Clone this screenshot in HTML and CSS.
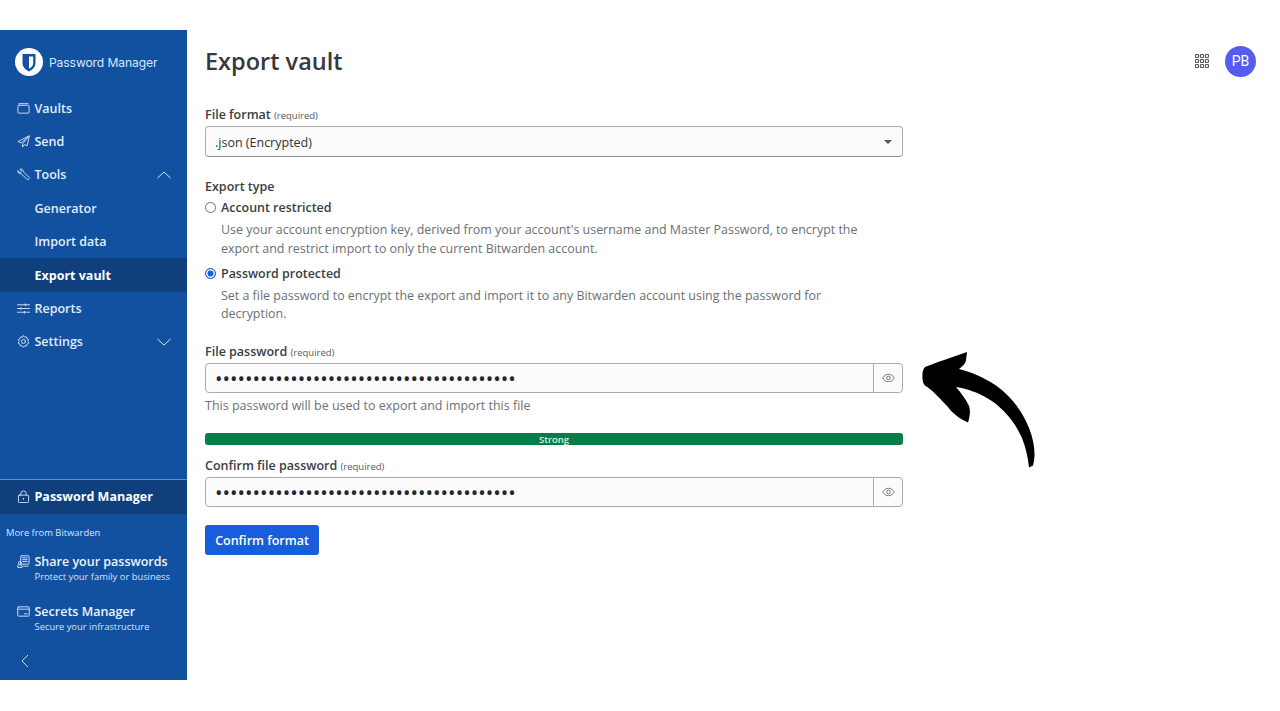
FILE: index.html
```html
<!DOCTYPE html>
<html lang="en">
<head>
<meta charset="utf-8">
<title>Export vault</title>
<link rel="stylesheet" href="styles.css">
</head>
<body>
<div class="frame">
  <aside class="sidebar">
    <div class="brand">
      <span class="brand-badge">
        <svg viewBox="0 0 28 28" width="28" height="28"><circle cx="14" cy="14" r="14" fill="#fff"/><path d="M7.500 6h13v9c0 4.200-3.200 6.800-6.500 8.500C10.700 21.800 7.500 19.200 7.500 15z" fill="#12519f"/><path d="M14 8.500h4.200V15c0 2.800-2 4.600-4.200 5.800z" fill="#fff"/></svg>
      </span>
      <span class="brand-name">Password Manager</span>
    </div>
    <nav class="nav">
      <a class="nav-row"><svg class="ico" viewBox="0 0 14 14"><rect x="1" y="3.500" width="12" height="8.500" rx="1"/><path d="M2 1.800h10"/></svg><span>Vaults</span></a>
      <a class="nav-row"><svg class="ico" viewBox="0 0 14 14"><path d="M13 1 1 7l3.500 1.500L13 1 6 9.500 6 13l2-2.700 2.500 1.200z"/></svg><span>Send</span></a>
      <a class="nav-row"><svg class="ico" viewBox="0 0 14 14"><path d="M1 3.200 3.200 5.200 5 3.400 3.100 1.200C5 .4 7 1.800 6.800 4L12.800 10c.7.700.6 1.500 0 2.100s-1.400.7-2.100 0L4.600 6.200C2.500 6.600.5 5.200 1 3.200z"/></svg><span>Tools</span><svg class="chev" viewBox="0 0 14 8"><path d="M.5 7 7 1l6.500 6"/></svg></a>
      <a class="nav-row sub"><span>Generator</span></a>
      <a class="nav-row sub"><span>Import data</span></a>
      <a class="nav-row sub active"><span>Export vault</span></a>
      <a class="nav-row"><svg class="ico" viewBox="0 0 14 14"><path d="M.5 3h13M.5 7h13M.5 11h13M9 2v2M4 6v2M8 10v2"/></svg><span>Reports</span></a>
      <a class="nav-row"><svg class="ico" viewBox="0 0 14 14"><path d="M7 .8 8.300 2.300l2-.2.500 2 1.800 1-.8 1.900.8 1.900-1.800 1-.5 2-2-.2L7 13.200l-1.300-1.500-2 .2-.5-2-1.800-1 .8-1.900-.8-1.900 1.800-1 .5-2 2 .2z"/><circle cx="7" cy="7" r="2.200"/></svg><span>Settings</span><svg class="chev" viewBox="0 0 14 8"><path d="M.5 1 7 7l6.500-6"/></svg></a>
    </nav>
    <div class="side-foot">
      <a class="product-row"><svg class="ico" viewBox="0 0 14 14"><rect x="1.500" y="5.500" width="11" height="8" rx="1"/><path d="M4 5.500V4a3 3 0 0 1 6 0v1.500M7 9v1"/></svg><span>Password Manager</span></a>
      <p class="more">More from Bitwarden</p>
      <a class="promo"><svg class="ico" viewBox="0 0 14 14"><rect x="4" y=".8" width="9" height="9" rx=".8"/><path d="M6 3h5M6 5h5M6 7h5"/><circle cx="3" cy="8.500" r="1.500"/><path d="M.8 13v-1.200c0-.8.600-1.300 1.300-1.300h2c.8 0 1.300.5 1.300 1.300V13zM7 12h5"/></svg><span class="promo-text"><b>Share your passwords</b><small>Protect your family or business</small></span></a>
      <a class="promo"><svg class="ico" viewBox="0 0 14 14"><rect x=".8" y="2" width="12.400" height="10" rx="1"/><path d="M.8 4.500h12.400M8 9.500h3"/></svg><span class="promo-text"><b>Secrets Manager</b><small>Secure your infrastructure</small></span></a>
      <div class="collapse"><svg viewBox="0 0 8 14" width="8" height="14"><path d="M7 1 1 7l6 6"/></svg></div>
    </div>
  </aside>
  <main class="main">
    <header class="top">
      <h1>Export vault</h1>
      <div class="top-tools">
        <svg class="apps" viewBox="0 0 14 14" width="14" height="14"><g><rect x=".5" y=".5" width="3" height="3" rx=".8"/><rect x="5.500" y=".5" width="3" height="3" rx=".8"/><rect x="10.500" y=".5" width="3" height="3" rx=".8"/><rect x=".5" y="5.500" width="3" height="3" rx=".8"/><rect x="5.500" y="5.500" width="3" height="3" rx=".8"/><rect x="10.500" y="5.500" width="3" height="3" rx=".8"/><rect x=".5" y="10.500" width="3" height="3" rx=".8"/><rect x="5.500" y="10.500" width="3" height="3" rx=".8"/><rect x="10.500" y="10.500" width="3" height="3" rx=".8"/></g></svg>
        <span class="avatar">PB</span>
      </div>
    </header>
    <form class="form">
      <div class="field-label">File format <small>(required)</small></div>
      <div class="select"><span>.json (Encrypted)</span><i class="caret"></i></div>

      <div class="type-label">Export type</div>
      <div class="radio-row"><span class="radio"></span>Account restricted</div>
      <p class="hint">Use your account encryption key, derived from your account's username and Master Password, to encrypt the export and restrict import to only the current Bitwarden account.</p>
      <div class="radio-row second"><span class="radio on"></span>Password protected</div>
      <p class="hint hint-tight">Set a file password to encrypt the export and import it to any Bitwarden account using the password for decryption.</p>

      <div class="field-label pw-label">File password <small>(required)</small></div>
      <div class="pw-group">
        <div class="pw-value">••••••••••••••••••••••••••••••••••••••••</div>
        <div class="pw-eye"><svg class="eye" viewBox="0 0 14 10" width="13" height="10"><path d="M.7 5C2.300 2.300 4.500 1 7 1s4.700 1.300 6.300 4C11.700 7.700 9.500 9 7 9S2.300 7.700.7 5z"/><circle cx="7" cy="5" r="2"/></svg></div>
      </div>
      <p class="helper">This password will be used to export and import this file</p>
      <div class="meter">Strong</div>
      <div class="field-label confirm-label">Confirm file password <small>(required)</small></div>
      <div class="pw-group">
        <div class="pw-value">••••••••••••••••••••••••••••••••••••••••</div>
        <div class="pw-eye"><svg class="eye" viewBox="0 0 14 10" width="13" height="10"><path d="M.7 5C2.300 2.300 4.500 1 7 1s4.700 1.300 6.300 4C11.700 7.700 9.500 9 7 9S2.300 7.700.7 5z"/><circle cx="7" cy="5" r="2"/></svg></div>
      </div>
      <button class="btn" type="button">Confirm format</button>
    </form>
    <svg class="arrow" viewBox="0 0 120 120" width="120" height="120"><path d="M1.500 22C1 28 2 33 5.500 34.500C14 40.500 19 47 27 55C31 61 39 67 47 70.500C49 65 49.500 58 48 54C45 47 39 40 35 35C47 37 58 41 66 46C80 54 93 68 101 86C105 96 107 106 108 115.500L112 113.500C115 103 113.500 90 108 76C100 56 88 43 75 33.500C64 26 50 20 38 17C42 14 45 11 45 8L46 0C31 5 14 11 4 15C2.500 17 1.500 19 1.500 22z" fill="#000"/></svg>
  </main>
</div>
</body>
</html>
```
FILE: styles.css
```css
* { box-sizing: border-box; }
html, body { margin: 0; padding: 0; background: #fff; }
body { font-family: "Open Sans", "Liberation Sans", sans-serif; color: #2f3338; overflow: hidden; height: 711px; }
.frame { display: flex; height: 650px; margin-top: 30px; background: #fff; }

.sidebar { width: 187px; flex: none; background: #12519f; color: #eaf1fb; display: flex; flex-direction: column; }
.brand { display: flex; align-items: center; gap: 6px; height: 62px; margin-top: 1px; padding-left: 15px; }
.brand-badge { display: flex; width: 28px; height: 28px; }
.brand-name { font-family: "Inter", "Open Sans", sans-serif; font-size: 12.100px; color: #dbe7f8; letter-spacing: -0.1px; }
.nav { display: flex; flex-direction: column; margin-top: -1.500px; }
.nav-row { display: flex; align-items: center; height: 33.4px; padding-left: 17px; font-size: 12.500px; font-weight: 600; color: #e3edfb; }
.nav-row .ico { margin-right: 4.500px; }
.nav-row.sub { padding-left: 34.500px; }
.nav-row.active { background: #0f3f7c; color: #fff; font-weight: 700; }
.ico { width: 13px; height: 13px; flex: none; fill: none; stroke: #d5e3f7; stroke-width: 1; stroke-linejoin: round; stroke-linecap: round; }
.chev { width: 14px; height: 8px; margin-left: auto; margin-right: 16px; fill: none; stroke: #d5e3f7; stroke-width: 1; }

.side-foot { margin-top: auto; display: flex; flex-direction: column; }
.product-row { display: flex; align-items: center; gap: 4.500px; height: 35px; padding-left: 17px; background: #0f3f7c; border-top: 1px solid #5d8fcf; color: #fff; font-size: 12.500px; font-weight: 700; }
.more { margin: 11.500px 0 0 6px; font-size: 9.400px; line-height: 15px; color: #dbe7f8; }
.promo { display: flex; align-items: flex-start; gap: 4.500px; height: 50px; padding: 12.500px 0 0 17px; }
.promo .ico { margin-top: 2px; }
.promo-text { display: flex; flex-direction: column; }
.promo-text b { font-size: 12.500px; font-weight: 600; line-height: 17px; color: #edf3fc; }
.promo-text small { font-size: 9.400px; line-height: 13px; color: #d5e3f7; }
.collapse { height: 40px; padding: 11px 0 0 21px; }
.collapse svg { fill: none; stroke: #c6d9f3; stroke-width: 1; }

.main { position: relative; flex: 1; padding: 0 24px 0 18px; }
.top { display: flex; align-items: center; justify-content: space-between; height: 62px; }
.top h1 { margin: 0; font-size: 23.500px; font-weight: 600; line-height: 32px; color: #36393d; }
.top-tools { display: flex; align-items: center; gap: 16px; }
.apps { fill: none; stroke: #55585c; stroke-width: 1.200; }
.avatar { display: flex; align-items: center; justify-content: center; width: 31px; height: 31px; border-radius: 50%; background: #575cf0; color: #fff; font-family: "Roboto", sans-serif; font-size: 14px; }

.form { width: 698px; margin-top: 14px; font-size: 12.500px; }
.field-label { font-size: 12.500px; font-weight: 600; line-height: 18px; color: #3a3e43; }
.field-label small { font-size: 9.500px; font-weight: 400; color: #55595e; }
.select { display: flex; align-items: center; justify-content: space-between; height: 31px; margin-top: 1px; padding: 1px 10px 0 9px; background: #fbfbfb; border: 1px solid #a9acaf; border-bottom-color: #8f9295; border-radius: 4px; }
.caret { width: 0; height: 0; border: 4px solid transparent; border-top: 4px solid #555; border-bottom: 0; }
.type-label { margin-top: 21px; font-weight: 600; font-size: 12.500px; line-height: 18px; color: #3a3e43; }
.radio-row { display: flex; align-items: center; gap: 5px; margin-top: 2px; height: 18px; font-weight: 600; font-size: 12.450px; color: #3a3e43; }
.radio-row.second { margin-top: 6.500px; }
.radio { width: 11px; height: 11px; border-radius: 50%; border: 1px solid #6c7075; background: #fff; }
.radio.on { border-color: #175ddc; background: #175ddc; box-shadow: inset 0 0 0 1.500px #fff; }
.hint { margin: 5px 0 0 16px; max-width: 660px; font-size: 12.450px; line-height: 18.500px; color: #6c7075; }
.hint-tight { margin-top: 4px; }
.pw-label { margin-top: 19px; }
.pw-group { display: flex; height: 30px; margin-top: 1px; border: 1px solid #a9acaf; border-radius: 4px; background: #fbfbfb; }
.pw-value { flex: 1; padding-left: 9px; font-size: 20px; line-height: 30px; color: #23262a; border-right: 1px solid #a9acaf; }
.pw-eye { display: flex; align-items: center; justify-content: center; width: 28px; }
.eye { fill: none; stroke: #6c7075; stroke-width: 1; }
.helper { margin: 4px 0 0; font-size: 12.500px; line-height: 18px; color: #6c7075; }
.meter { height: 12.500px; margin-top: 18px; border-radius: 3px; background: #077d4a; color: #dff2e8; font-size: 9.500px; font-weight: 600; line-height: 13px; text-align: center; }
.confirm-label { margin-top: 11.500px; }
.btn { display: block; width: 114px; height: 30px; margin-top: 18.500px; padding: 0; border: 0; border-radius: 3px; background: #175ddc; color: #fff; font-family: inherit; font-size: 12.500px; font-weight: 600; }

.arrow { position: absolute; left: 734px; top: 322px; }
```
